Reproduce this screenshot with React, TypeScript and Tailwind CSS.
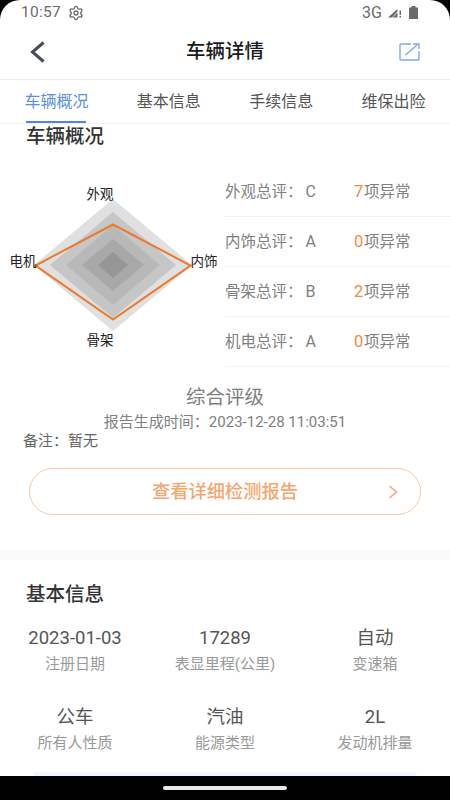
import { Settings } from "lucide-react";

const tabs = ["车辆概况", "基本信息", "手续信息", "维保出险"];

const scores = [
  { name: "外观总评：", grade: "C", count: 7 },
  { name: "内饰总评：", grade: "A", count: 0 },
  { name: "骨架总评：", grade: "B", count: 2 },
  { name: "机电总评：", grade: "A", count: 0 },
];

const basicInfo = [
  { value: "2023-01-03", label: "注册日期" },
  { value: "17289", label: "表显里程(公里)" },
  { value: "自动", label: "变速箱" },
  { value: "公车", label: "所有人性质" },
  { value: "汽油", label: "能源类型" },
  { value: "2L", label: "发动机排量" },
];

const layers = [
  { rx: 79, ry: 66, fill: "#e0e0e0" },
  { rx: 63, ry: 53, fill: "#c6c6c6" },
  { rx: 47, ry: 40, fill: "#b8b8b8" },
  { rx: 31, ry: 26, fill: "#a8a8a8" },
  { rx: 15, ry: 13, fill: "#969696" },
];

const RadarChart = () => (
  <svg className="w-[225px] h-[200px] shrink-0" viewBox="0 167 225 200">
    {layers.map((l) => (
      <polygon
        key={l.rx}
        fill={l.fill}
        points={`113,${265 - l.ry} ${113 + l.rx},265 113,${265 + l.ry} ${113 - l.rx},265`}
      />
    ))}
    <polygon
      points="113,224.5 190.5,265.5 113,319.5 35.5,265.5"
      fill="none"
      stroke="#ec7a2c"
      strokeWidth="2"
    />
    <g fontSize="13.5" fill="#222" textAnchor="middle">
      <text x="100" y="199">外观</text>
      <text x="204" y="266">内饰</text>
      <text x="100" y="345">骨架</text>
      <text x="23" y="266">电机</text>
    </g>
  </svg>
);

const App = () => {
  return (
    <div className="w-[450px] h-[800px] bg-black flex flex-col overflow-hidden font-[Roboto,'Noto_Sans_CJK_SC',sans-serif]">
      <div className="flex-1 min-h-0 bg-white rounded-t-[20px] overflow-hidden flex flex-col">
        {/* status bar */}
        <div className="h-[25px] shrink-0 flex items-center pl-[21px] pr-[32px] text-[#6b6b6b]">
          <span className="text-[15.5px] tracking-[0.3px]">10:57</span>
          <Settings className="w-[16px] h-[16px] ml-[7px]" strokeWidth={2} />
          <span className="ml-auto text-[16px]">3G</span>
          <svg className="w-[14px] h-[10px] ml-[6px]" viewBox="0 0 14 10">
            <path d="M0 9.5 L9.5 1 V3.5 L4 9.5 Z M4.5 9.5 L9.5 4.5 V9.5 Z" fill="#6b6b6b" />
            <rect x="11.5" y="2.5" width="1.5" height="4.5" fill="#6b6b6b" />
            <rect x="11.5" y="8" width="1.5" height="1.5" fill="#6b6b6b" />
          </svg>
          <svg className="w-[9px] h-[13px] ml-[7px]" viewBox="0 0 9 13">
            <path d="M2.5 0 H6.5 V1.5 H9 V13 H0 V1.5 H2.5 Z" fill="#6b6b6b" />
          </svg>
        </div>

        {/* header */}
        <div className="h-[55px] shrink-0 flex items-center justify-between pl-[30px] pr-[30px] border-b border-[#eeeeee]">
          <div className="w-[21px]">
            <svg className="w-[15px] h-[22px]" viewBox="0 0 15 22" fill="none" stroke="#474d57" strokeWidth="3">
              <path d="M13.5 1.5 L2.5 11 L13.5 20.5" />
            </svg>
          </div>
          <h1 className="text-[19.5px] font-medium text-[#1a1a1a]">车辆详情</h1>
          <svg className="w-[21px] h-[18px]" viewBox="0 0 21 18" fill="none" stroke="#7ea9e6" strokeWidth="1.4">
            <path d="M12 1 H2 A1 1 0 0 0 1 2 V16 A1 1 0 0 0 2 17 H19 A1 1 0 0 0 20 16 V8" />
            <path d="M6.5 12 L18 2 M14 1 H20 V6" />
          </svg>
        </div>

        {/* tabs */}
        <div className="h-[44px] shrink-0 flex justify-between pl-[25px] pr-[25px] border-b border-[#f2f2f2]">
          {tabs.map((tab, i) => (
            <div
              key={tab}
              className={`relative w-[63px] flex items-center justify-center text-[16px] whitespace-nowrap ${
                i === 0 ? "text-[#5b8fe0]" : "text-[#555555]"
              }`}
            >
              {tab}
              {i === 0 && <span className="absolute left-[1px] right-[2px] bottom-0 h-[2px] bg-[#4f86e0]" />}
            </div>
          ))}
        </div>

        {/* vehicle overview */}
        <h2 className="h-[26px] shrink-0 pl-[26px] text-[19.5px] leading-[25px] font-medium text-[#333333]">车辆概况</h2>

        <div className="mt-[17px] h-[200px] shrink-0 flex">
          <RadarChart />
          <div className="flex-1">
            {scores.map((s) => (
              <div key={s.name} className="h-[50px] pt-[2px] flex items-center border-b border-[#f2f2f2] text-[15.5px] text-[#808080]">
                <span className="w-[129px] whitespace-nowrap">
                  {s.name}
                  <span className="ml-[3px] text-[16px]">{s.grade}</span>
                </span>
                <span className="text-[#f08a45] w-[10px] text-[16.5px]">{s.count}</span>
                <span>项异常</span>
              </div>
            ))}
          </div>
        </div>

        <div className="mt-[18px] text-center text-[19.5px] leading-[26px] text-[#808080]">综合评级</div>
        <div className="mt-[1px] text-center text-[15px] leading-[20px] text-[#808080] whitespace-nowrap">
          报告生成时间：2023-12-28 11:03:51
        </div>
        <div className="pl-[23px] text-[15px] leading-[18px] text-[#666666]">备注：暂无</div>

        <button
          type="button"
          className="relative mt-[18px] mx-[29px] h-[47px] shrink-0 rounded-full border border-[#f5c9a6] text-[18.25px] font-medium text-[#f5a66e] flex items-center justify-center"
        >
          查看详细检测报告
          <svg className="absolute right-[22px] w-[10px] h-[14px]" viewBox="0 0 10 14" fill="none" stroke="#f5a66e" strokeWidth="1.5">
            <path d="M1.5 1 L8.5 7 L1.5 13" />
          </svg>
        </button>

        <div className="mt-[35px] h-[10px] shrink-0 bg-[#f9f9f9]" />

        {/* basic info */}
        <h2 className="mt-[22px] pl-[26px] text-[19.5px] leading-[26px] font-medium text-[#333333]">基本信息</h2>
        <div className="mt-[17px] grid grid-cols-3 gap-y-[26.5px] text-center">
          {basicInfo.map((item) => (
            <div key={item.label} className="flex flex-col">
              <span className="text-[18.5px] leading-[26px] text-[#555555]">{item.value}</span>
              <span className="text-[15px] leading-[26px] text-[#999999]">{item.label}</span>
            </div>
          ))}
        </div>
        <div className="mt-auto mx-[33px] h-[4px] shrink-0 rounded-t-[10px] bg-[#f1f7fe]" />
      </div>

      {/* gesture bar */}
      <div className="h-[24px] shrink-0 flex items-center justify-center">
        <div className="w-[124px] h-[4px] rounded-full bg-[#e8e8e8]" />
      </div>
    </div>
  );
};

export default App;
